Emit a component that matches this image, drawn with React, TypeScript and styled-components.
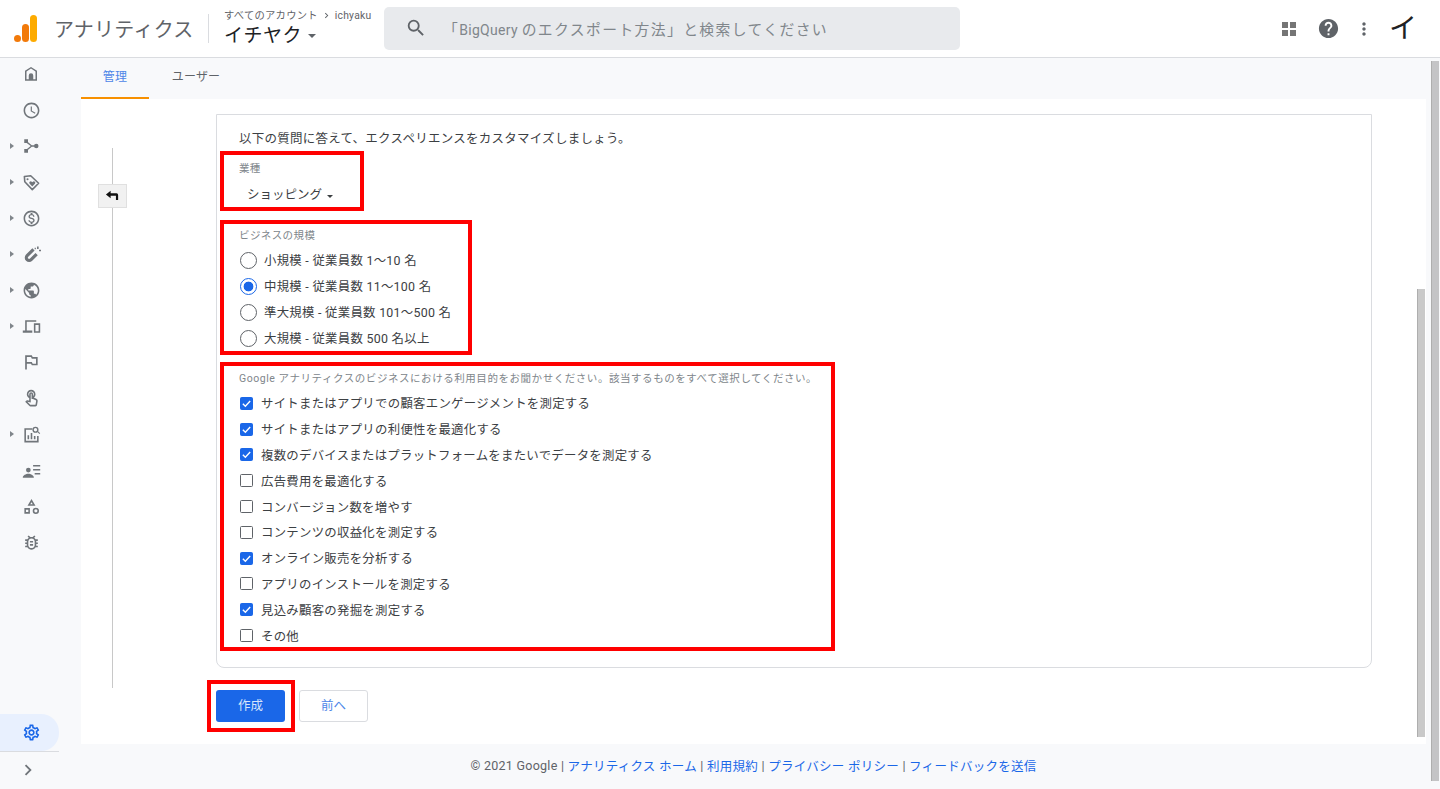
import { FC, ReactNode } from "react"
import styled, { createGlobalStyle } from "styled-components"
import {
  MdAccessTime,
  MdChevronRight,
  MdHelp,
  MdMoreVert,
  MdOutlineBugReport,
  MdOutlineMonetizationOn,
  MdOutlineSettings,
  MdOutlineTouchApp,
  MdOutlinedFlag,
  MdPublic,
  MdSearch,
} from "react-icons/md"

const GlobalStyle = createGlobalStyle`
  html, body {
    margin: 0;
    height: 100%;
    overflow: hidden;
    background: #f8f9fb;
    font-family: Roboto, "Noto Sans CJK JP", "Liberation Sans", sans-serif;
    color: #3c4043;
  }
  * {
    box-sizing: border-box;
  }
`

const Page = styled.div`
  position: relative;
  width: 1440px;
  height: 789px;
  overflow: hidden;
  display: flex;
  flex-direction: column;
`

const Header = styled.header`
  height: 58px;
  flex: none;
  background: #fff;
  border-bottom: 1px solid #dadce0;
  display: flex;
  align-items: center;
  padding-left: 14px;
`

const Logo = styled.svg`
  width: 24px;
  height: 28px;
  flex: none;
  margin-top: 1px;
`

const ProductName = styled.div`
  width: 140px;
  flex: none;
  margin-left: 16px;
  font-size: 20px;
  color: #5f6368;
  letter-spacing: 0.25px;
  white-space: nowrap;
`

const HeaderDivider = styled.div`
  width: 1px;
  height: 29px;
  margin: 0 15px 0 14px;
  background: #dadce0;
`

const AccountBox = styled.div`
  width: 160px;
  flex: none;
  display: flex;
  flex-direction: column;
  margin-top: -1px;
`

const Breadcrumb = styled.div`
  font-size: 10.3px;
  letter-spacing: 0.25px;
  line-height: 14px;
  color: #5f6368;
  display: flex;
  align-items: center;
  gap: 3px;
  white-space: nowrap;
`

const AccountName = styled.div`
  font-size: 19px;
  letter-spacing: 0.5px;
  line-height: 25px;
  color: #202124;
  display: flex;
  align-items: center;
  white-space: nowrap;
`

const Caret = styled.span<{ $size: number; $color: string }>`
  display: inline-block;
  width: 0;
  height: 0;
  margin-left: ${(p) => p.$size + 2}px;
  margin-top: 2px;
  border-left: ${(p) => p.$size}px solid transparent;
  border-right: ${(p) => p.$size}px solid transparent;
  border-top: ${(p) => p.$size}px solid ${(p) => p.$color};
`

const SearchBox = styled.div`
  width: 576px;
  height: 43px;
  flex: none;
  margin-top: -1px;
  background: #e8eaed;
  border-radius: 5px;
  display: flex;
  align-items: center;
  padding-left: 21px;
  color: #5f6368;
`

const Placeholder = styled.span`
  margin-left: 16px;
  font-size: 14.8px;
  color: #80868b;
  letter-spacing: 1.4px;
  white-space: nowrap;
`

const PlaceholderLatin = styled.span`
  font-size: 14px;
  letter-spacing: 0.3px;
`

const HeaderActions = styled.div`
  margin-left: auto;
  display: flex;
  align-items: center;
  color: #5f6368;
  padding-right: 18px;
`

const ActionSlot = styled.div<{ $width: number }>`
  width: ${(p) => p.$width}px;
  display: flex;
  justify-content: center;
  align-items: center;
`

const AppsGrid = styled.div`
  display: grid;
  grid-template-columns: 6px 6px;
  gap: 2px;
  & > span {
    width: 6px;
    height: 6px;
    background: #757575;
  }
`

const Avatar = styled.div`
  width: 38px;
  text-align: center;
  font-size: 28px;
  line-height: 32px;
  color: #202124;
`

const Body = styled.div`
  flex: 1;
  min-height: 0;
  display: flex;
`

const Sidebar = styled.nav`
  width: 81px;
  flex: none;
  display: flex;
  flex-direction: column;
`

const NavList = styled.div`
  flex: 1;
  margin-top: -2px;
  display: flex;
  flex-direction: column;
`

const NavItem = styled.div`
  height: 36px;
  width: 59px;
  flex: none;
  display: flex;
  align-items: center;
  justify-content: center;
  padding-left: 3px;
  position: relative;
  color: #70757a;
`

const NavArrow = styled.span`
  position: absolute;
  left: 10px;
  top: 14.5px;
  width: 0;
  height: 0;
  border-top: 3.5px solid transparent;
  border-bottom: 3.5px solid transparent;
  border-left: 4px solid #80868b;
`

const SettingsItem = styled.div`
  height: 37px;
  width: 59px;
  margin-top: auto;
  flex: none;
  display: flex;
  align-items: center;
  justify-content: center;
  padding-left: 3px;
  background: #e8f0fe;
  border-radius: 0 18px 18px 0;
  color: #1a67e8;
`

const CollapseItem = styled.div`
  height: 38px;
  width: 59px;
  flex: none;
  border-top: 1px solid #dadce0;
  display: flex;
  align-items: center;
  justify-content: center;
  padding: 0 3px 2px 0;
  color: #70757a;
`

const Main = styled.main`
  width: 1345px;
  flex: none;
  display: flex;
  flex-direction: column;
`

const Tabs = styled.div`
  height: 41px;
  flex: none;
  display: flex;
`

const Tab = styled.div<{ $active?: boolean }>`
  width: 68px;
  margin-right: 13px;
  display: flex;
  align-items: center;
  justify-content: center;
  padding-bottom: 4px;
  font-size: 12px;
  letter-spacing: 0.2px;
  color: ${(p) => (p.$active ? "#4d86e8" : "#5f6368")};
  border-bottom: 2px solid ${(p) => (p.$active ? "#f79000" : "transparent")};
`

const Panel = styled.div`
  position: relative;
  height: 645px;
  flex: none;
  background: #fff;
  display: flex;
  padding: 15px 54px 0 0;
`

const Rail = styled.div`
  width: 135px;
  flex: none;
  height: 540px;
  margin-top: 34px;
  position: relative;
  &::before {
    content: "";
    position: absolute;
    left: 31px;
    top: 0;
    bottom: 0;
    width: 1px;
    background: #c8c8c8;
  }
`

const BackButton = styled.div`
  position: absolute;
  left: 17px;
  top: 36px;
  width: 29px;
  height: 24px;
  background: #f1f1f1;
  border: 1px solid #e0e0e0;
  display: flex;
  align-items: center;
  justify-content: center;
  padding-bottom: 1px;
  color: #111;
`

const Column = styled.div`
  flex: 1;
  display: flex;
  flex-direction: column;
`

const Card = styled.section`
  height: 554px;
  flex: none;
  border: 1px solid #dadce0;
  border-radius: 0 0 8px 8px;
  padding: 14.5px 0 0 3px;
  display: flex;
  flex-direction: column;
  align-items: flex-start;
`

const Intro = styled.p`
  margin: 0 0 3.5px 19px;
  font-size: 12.5px;
  letter-spacing: 0.26px;
  line-height: 18px;
  color: #3c4043;
  white-space: nowrap;
`

const Highlight = styled.div<{ $width: number; $height: number; $gap: number }>`
  width: ${(p) => p.$width}px;
  height: ${(p) => p.$height}px;
  margin-bottom: ${(p) => p.$gap}px;
  border: 4px solid #ff0000;
  padding-left: 15px;
  display: flex;
  flex-direction: column;
`

const FieldLabel = styled.div<{ $height: number; $after: number; $spacing: number }>`
  height: ${(p) => p.$height}px;
  margin-bottom: ${(p) => p.$after}px;
  flex: none;
  display: flex;
  align-items: center;
  font-size: 10.5px;
  letter-spacing: ${(p) => p.$spacing}px;
  color: #80868b;
  white-space: nowrap;
`

const SelectValue = styled.div`
  margin: 7px 0 0 8px;
  font-size: 12.5px;
  line-height: 18px;
  color: #3c4043;
  display: flex;
  align-items: center;
  white-space: nowrap;
`

const OptionRow = styled.label<{ $height: number }>`
  height: ${(p) => p.$height}px;
  flex: none;
  display: flex;
  align-items: center;
  font-size: 12.4px;
  letter-spacing: 0.28px;
  color: #3c4043;
  white-space: nowrap;
`

const RadioMark = styled.span<{ $on: boolean }>`
  width: 17px;
  height: 17px;
  flex: none;
  margin: 0 7.5px 0 0.5px;
  border-radius: 50%;
  border: 1px solid ${(p) => (p.$on ? "#1a67e8" : "#5f6368")};
  background: ${(p) =>
    p.$on ? "radial-gradient(circle, #1a67e8 0 4.6px, #fff 5.2px)" : "#fff"};
`

const CheckMark = styled.span<{ $on: boolean }>`
  width: 13px;
  height: 13px;
  flex: none;
  margin: 0 8px 0 1px;
  border-radius: 1.5px;
  border: 1px solid ${(p) => (p.$on ? "#1a67e8" : "#5f6368")};
  background: ${(p) => (p.$on ? "#1a67e8" : "#fff")};
  display: flex;
  align-items: center;
  justify-content: center;
`

const ButtonRow = styled.div`
  display: flex;
  align-items: flex-start;
  margin: 12px 0 0 -9px;
`

const ButtonFrame = styled.div`
  border: 4px solid #ff0000;
  padding: 6px 6px 6px 5px;
  margin-right: 4px;
`

const PrimaryButton = styled.button`
  width: 69px;
  height: 32px;
  display: block;
  border: none;
  border-radius: 3px;
  padding: 0 0 3px;
  background: #1a67e8;
  color: #d6e4fb;
  font: inherit;
  font-size: 12.5px;
`

const SecondaryButton = styled.button`
  width: 69px;
  height: 32px;
  margin-top: 10px;
  border: 1px solid #dadce0;
  border-radius: 3px;
  padding: 0 0 3px;
  background: #fff;
  color: #4d86e8;
  font: inherit;
  font-size: 12.5px;
`

const Footer = styled.footer`
  flex: 1;
  display: flex;
  align-items: center;
  justify-content: center;
  padding-bottom: 3px;
  font-size: 12.5px;
  letter-spacing: 0.27px;
  color: #5f6368;
  white-space: pre;
`

const FooterLink = styled.a`
  color: #1a67e8;
`

const Scrollbar = styled.div<{ $left: number; $top: number; $height: number; $color: string }>`
  position: absolute;
  left: ${(p) => p.$left}px;
  top: ${(p) => p.$top}px;
  width: 8px;
  height: ${(p) => p.$height}px;
  background: ${(p) => p.$color};
  border-left: 1px solid #aeaeae;
`

const Ico: FC<{ children: ReactNode; size?: number }> = ({ children, size = 18 }) => (
  <svg width={size} height={size} viewBox="0 0 24 24" fill="currentColor">
    {children}
  </svg>
)

const navItems: { icon: ReactNode; arrow?: boolean }[] = [
  {
    icon: (
      <Ico>
        <path d="M12 2.5 4 7.5V21h16V7.5L12 2.5Zm6 16.5h-3v-5a3 3 0 0 0-6 0v5H6V8.6l6-3.8 6 3.8V19Z" />
        <path d="M9.5 14h5v5h-5z" />
      </Ico>
    ),
  },
  { icon: <MdAccessTime size={19} /> },
  {
    arrow: true,
    icon: (
      <Ico>
        <path d="M3 3h5v5H3zM3 16h5v5H3z" />
        <circle cx="19" cy="12" r="3" />
        <path d="M7 6l6 5h4v2h-4l-6 5-1.2-1.5L11.6 12 5.8 7.5z" />
      </Ico>
    ),
  },
  {
    arrow: true,
    icon: (
      <Ico size={19}>
        <path
          d="M3 4.5 3.5 11 13 21l8-8-10-9.5L3 4.5Z"
          fill="none"
          stroke="currentColor"
          strokeWidth="2"
          strokeLinejoin="round"
        />
        <circle cx="7" cy="8" r="1.3" />
        <path d="m13 17-3.3-3.4a1.8 1.8 0 0 1 2.6-2.5l.7.7.7-.7a1.8 1.8 0 0 1 2.6 2.5L13 17Z" />
      </Ico>
    ),
  },
  { arrow: true, icon: <MdOutlineMonetizationOn size={19} /> },
  {
    arrow: true,
    icon: (
      <Ico size={19}>
        <path
          d="M14.500 5.500 6.500 13.500a3.500 3.500 0 0 0 5 5l7-7"
          fill="none"
          stroke="currentColor"
          strokeWidth="4"
        />
        <path d="M19 2h2v3h-2zM21.500 6H24v2h-2.500zM16 3.500h1.500v2H16z" />
      </Ico>
    ),
  },
  { arrow: true, icon: <MdPublic size={19} /> },
  {
    arrow: true,
    icon: (
      <Ico size={19}>
        <path d="M4 4h14v2H6v11h7v3H1v-3h3V4Z" />
        <path fillRule="evenodd" d="M15 8h8v12h-8V8Zm2 2v8h4v-8h-4Z" />
      </Ico>
    ),
  },
  { icon: <MdOutlinedFlag size={20} /> },
  { icon: <MdOutlineTouchApp size={19} /> },
  {
    arrow: true,
    icon: (
      <Ico size={19}>
        <path d="M3 4h10v2H5v14h14v-6h2v8H3V4Z" />
        <path d="M7 13h2v5H7zM11 10h2v8h-2zM15 14h2v4h-2z" />
        <circle cx="17" cy="6" r="3" fill="none" stroke="currentColor" strokeWidth="1.8" />
        <path d="m19 8.500 3 3 1-1-3-3z" />
      </Ico>
    ),
  },
  {
    icon: (
      <Ico size={19}>
        <circle cx="8" cy="11.500" r="3" />
        <path d="M1 21c0-3 4-5 7-5s7 2 7 5H1ZM14 5h9v2h-9zM14 10h9v2h-9zM16 15h7v2h-7z" />
      </Ico>
    ),
  },
  {
    icon: (
      <Ico size={19}>
        <path
          fillRule="evenodd"
          d="M12 2.500 17 11H7l5-8.500Zm0 4-1.600 2.600h3.200L12 6.500Z"
        />
        <path fillRule="evenodd" d="M3 14h7v7H3v-7Zm2 2v3h3v-3H5Z" />
        <path
          fillRule="evenodd"
          d="M17.500 13.500a4 4 0 1 1 0 8 4 4 0 0 1 0-8Zm0 2a2 2 0 1 0 0 4 2 2 0 0 0 0-4Z"
        />
      </Ico>
    ),
  },
  { icon: <MdOutlineBugReport size={19} /> },
]

const sizes = [
  { label: "小規模 - 従業員数 1～10 名", on: false },
  { label: "中規模 - 従業員数 11～100 名", on: true },
  { label: "準大規模 - 従業員数 101～500 名", on: false },
  { label: "大規模 - 従業員数 500 名以上", on: false },
]

const purposes = [
  { label: "サイトまたはアプリでの顧客エンゲージメントを測定する", on: true },
  { label: "サイトまたはアプリの利便性を最適化する", on: true },
  { label: "複数のデバイスまたはプラットフォームをまたいでデータを測定する", on: true },
  { label: "広告費用を最適化する", on: false },
  { label: "コンバージョン数を増やす", on: false },
  { label: "コンテンツの収益化を測定する", on: false },
  { label: "オンライン販売を分析する", on: true },
  { label: "アプリのインストールを測定する", on: false },
  { label: "見込み顧客の発掘を測定する", on: true },
  { label: "その他", on: false },
]

const App: FC = () => {
  return (
    <Page>
      <GlobalStyle />
      <Header>
        <Logo viewBox="0 0 24 28">
          <rect x="16" y="0" width="7" height="27" rx="3.500" fill="#fdab00" />
          <rect x="8" y="9" width="7" height="18" rx="3.500" fill="#f27a0a" />
          <circle cx="3.500" cy="23.500" r="3.500" fill="#f27a0a" />
        </Logo>
        <ProductName>アナリティクス</ProductName>
        <HeaderDivider />
        <AccountBox>
          <Breadcrumb>
            すべてのアカウント
            <MdChevronRight size={11} />
            ichyaku
          </Breadcrumb>
          <AccountName>
            イチヤク
            <Caret $size={4} $color="#5f6368" />
          </AccountName>
        </AccountBox>
        <SearchBox>
          <MdSearch size={22} />
          <Placeholder>
            「<PlaceholderLatin>BigQuery </PlaceholderLatin>のエクスポート方法」と検索してください
          </Placeholder>
        </SearchBox>
        <HeaderActions>
          <ActionSlot $width={46}>
            <AppsGrid>
              <span />
              <span />
              <span />
              <span />
            </AppsGrid>
          </ActionSlot>
          <ActionSlot $width={32}>
            <MdHelp size={23} />
          </ActionSlot>
          <ActionSlot $width={40}>
            <MdMoreVert size={20} />
          </ActionSlot>
          <Avatar>イ</Avatar>
        </HeaderActions>
      </Header>
      <Body>
        <Sidebar>
          <NavList>
            {navItems.map((item, i) => (
              <NavItem key={i}>
                {item.arrow && <NavArrow />}
                {item.icon}
              </NavItem>
            ))}
            <SettingsItem>
              <MdOutlineSettings size={19} />
            </SettingsItem>
            <CollapseItem>
              <MdChevronRight size={22} />
            </CollapseItem>
          </NavList>
        </Sidebar>
        <Main>
          <Tabs>
            <Tab $active>管理</Tab>
            <Tab>ユーザー</Tab>
          </Tabs>
          <Panel>
            <Rail>
              <BackButton>
                <Ico size={15}>
                  <path d="M9 4.500v4h9.500a2.500 2.500 0 0 1 2.500 2.500v8h-3.500v-6.500H9v4L1.500 10.500 9 4.500Z" />
                </Ico>
              </BackButton>
            </Rail>
            <Column>
              <Card>
                <Intro>以下の質問に答えて、エクスペリエンスをカスタマイズしましょう。</Intro>
                <Highlight $width={144} $height={60} $gap={9}>
                  <FieldLabel $height={24} $after={0} $spacing={0.3}>
                    業種
                  </FieldLabel>
                  <SelectValue>
                    ショッピング
                    <Caret $size={3} $color="#3c4043" />
                  </SelectValue>
                </Highlight>
                <Highlight $width={252} $height={135} $gap={7}>
                  <FieldLabel $height={20} $after={3} $spacing={0.4}>
                    ビジネスの規模
                  </FieldLabel>
                  {sizes.map((s) => (
                    <OptionRow key={s.label} $height={26}>
                      <RadioMark $on={s.on} />
                      {s.label}
                    </OptionRow>
                  ))}
                </Highlight>
                <Highlight $width={615} $height={289} $gap={0}>
                  <FieldLabel $height={23} $after={1.5} $spacing={0.55}>
                    Google アナリティクスのビジネスにおける利用目的をお聞かせください。該当するものをすべて選択してください。
                  </FieldLabel>
                  {purposes.map((p) => (
                    <OptionRow key={p.label} $height={25.8}>
                      <CheckMark $on={p.on}>
                        {p.on && (
                          <svg width="11" height="11" viewBox="0 0 24 24" fill="none">
                            <path d="M4 12.500 9.500 18 20 6.500" stroke="#fff" strokeWidth="3" />
                          </svg>
                        )}
                      </CheckMark>
                      {p.label}
                    </OptionRow>
                  ))}
                </Highlight>
              </Card>
              <ButtonRow>
                <ButtonFrame>
                  <PrimaryButton>作成</PrimaryButton>
                </ButtonFrame>
                <SecondaryButton>前へ</SecondaryButton>
              </ButtonRow>
            </Column>
            <Scrollbar $left={1336} $top={190} $height={448} $color="#c9c9c9" />
          </Panel>
          <Footer>
            © 2021 Google | <FooterLink>アナリティクス ホーム</FooterLink> | <FooterLink>利用規約</FooterLink> | <FooterLink>プライバシー ポリシー</FooterLink> | <FooterLink>フィードバックを送信</FooterLink>
          </Footer>
        </Main>
      </Body>
      <Scrollbar $left={1431} $top={61} $height={720} $color="#c4c4c6" />
    </Page>
  )
}

export default App
